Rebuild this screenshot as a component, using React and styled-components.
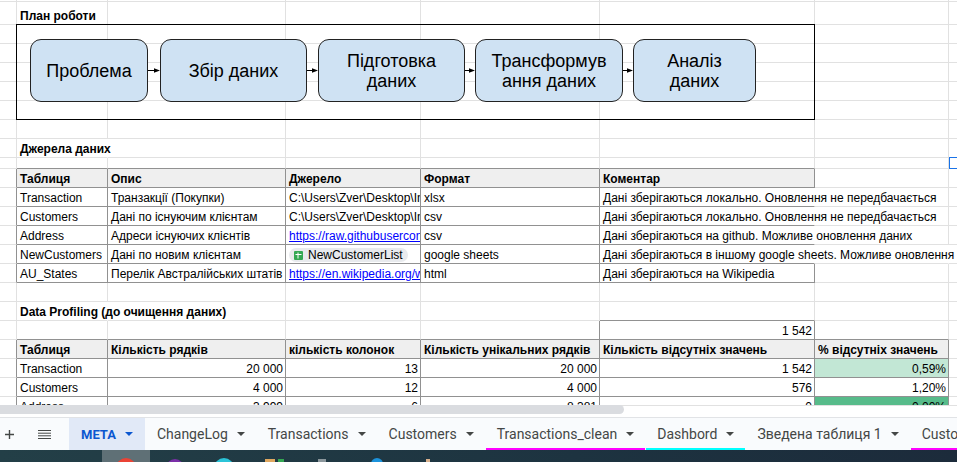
import React from 'react';
import styled, { createGlobalStyle } from 'styled-components';

const Global = createGlobalStyle`
  * { box-sizing: border-box; }
  html, body, #root { height: 100%; margin: 0; }
  body { background: #fff; overflow: hidden; }
`;

const Page = styled.div`
  height: 100%;
  display: flex;
  flex-direction: column;
  font-family: "Liberation Sans", Arial, sans-serif;
  font-size: 12px;
  color: #000;
`;

const SheetView = styled.main`
  flex: 1;
  min-height: 0;
  overflow: hidden;
`;

const Grid = styled.table`
  width: 100%;
  min-width: 957px;
  table-layout: fixed;
  border-collapse: separate;
  border-spacing: 0;
`;

const Row = styled.tr`
  height: ${(p) => p.$h || 19}px;
`;

const edge = (dark) => (dark ? '#919191' : '#e1e1e1');

const Cell = styled.td`
  position: ${(p) => (p.$host ? 'relative' : 'static')};
  padding: ${(p) => (p.$host || p.$empty ? '0' : p.$num ? '2px 2px 0' : '2px 3px 0')};
  line-height: 16px;
  vertical-align: bottom;
  white-space: nowrap;
  overflow: ${(p) => (p.$spill ? 'visible' : 'hidden')};
  text-align: ${(p) => (p.$num ? 'right' : 'left')};
  font-weight: ${(p) => (p.$bold ? 700 : 400)};
  background: ${(p) => p.$fill || 'transparent'};
  border-bottom: 1px solid ${(p) => edge(p.$bottom)};
  border-right: 1px solid ${(p) => (p.$open ? 'transparent' : edge(p.$right))};

  &:last-child {
    border-right: 0;
  }
`;

const SheetLink = styled.a`
  color: #00f;
  text-decoration: underline;
`;

const Chip = styled.span`
  display: inline-flex;
  align-items: center;
  gap: 5px;
  height: 14px;
  padding: 0 5px;
  border-radius: 7px;
  background: #e8eaed;
  line-height: 14px;
  vertical-align: bottom;
  margin-bottom: 1px;
`;

const Diagram = styled.figure`
  position: absolute;
  z-index: 1;
  top: -1px;
  left: -1px;
  width: 799px;
  height: 96px;
  margin: 0;
  padding: 0 13px 3px;
  border: 1px solid #000;
  display: flex;
  align-items: center;
`;

const Step = styled.div`
  flex: none;
  width: ${(p) => p.$w}px;
  height: 63px;
  padding-top: 1px;
  display: flex;
  align-items: center;
  justify-content: center;
  border: 1px solid #222;
  border-radius: 11px;
  background: #cfe2f3;
  font-size: 18px;
  line-height: 20px;
  text-align: center;
  white-space: pre-line;
`;

const Selection = styled.div`
  position: absolute;
  z-index: 1;
  top: -1px;
  left: 0;
  right: -2px;
  height: 12px;
  border: 1px solid #1a73e8;
`;

const ScrollTrack = styled.div`
  height: 12px;
  background: linear-gradient(#e1e1e1 0 1px, #fff 1px);
`;

const ScrollThumb = styled.div`
  width: 65.2%;
  height: 9px;
  border-radius: 0 5px 5px 0;
  background: #dadce0;
`;

const TabBar = styled.nav`
  height: 33px;
  display: flex;
  overflow: hidden;
  border-top: 1px solid #e1e3e6;
  background: #f9fbfd;
`;

const IconButton = styled.button`
  flex: none;
  width: ${(p) => p.$w}px;
  padding: 0;
  border: 0;
  background: none;
  display: flex;
  align-items: center;
  justify-content: center;
`;

const Tab = styled.button`
  flex: none;
  display: flex;
  align-items: center;
  gap: 9px;
  padding: ${(p) => (p.$active ? '2px 12px 0' : '2px 11px 0')};
  border: 0;
  border-bottom: 2px solid ${(p) => p.$mark || 'transparent'};
  margin-right: 1px;
  background: ${(p) => (p.$active ? '#e1e9f7' : 'transparent')};
  color: ${(p) => (p.$active ? '#0b57d0' : '#444746')};
  font: ${(p) => (p.$active ? '700 13px' : '400 14px')} Roboto, sans-serif;
  white-space: nowrap;
`;

const Taskbar = styled.footer`
  height: 12px;
  overflow: hidden;
  background: linear-gradient(90deg, #233f47, #1d3340 60%, #1c2b3b);
`;

const COLS = [17, 91, 178, 135, 179, 215, 134];

const Caret = () => (
  <svg width="8" height="4" viewBox="0 0 8 4" aria-hidden="true">
    <path d="M0 0h8L4 4z" fill="currentColor" />
  </svg>
);

const Arrow = ({ w }) => (
  <svg width={w} height="8" viewBox={`${12 - w} 0 ${w} 8`} aria-hidden="true">
    <path d="M0 3.5h8" stroke="#000" />
    <path d="M6 1.2l6 2.3-6 2.3z" />
  </svg>
);

const SheetsIcon = () => (
  <svg width="9" height="9" viewBox="0 0 9 9" aria-hidden="true">
    <rect width="9" height="9" rx="1" fill="#34a853" />
    <path d="M1.5 3.5h6M4 1.5v6" stroke="#fff" />
  </svg>
);

const STEPS = [
  ['Проблема', 118, 12],
  ['Збір даних', 147, 11],
  ['Підготовка\nданих', 147, 10],
  ['Трансформув\nання даних', 148, 10],
  ['Аналіз\nданих', 123, 0],
];

const Pipeline = () => (
  <Diagram>
    {STEPS.map(([name, w, link]) => (
      <React.Fragment key={name}>
        <Step $w={w}>{name}</Step>
        {link > 0 && <Arrow w={link} />}
      </React.Fragment>
    ))}
  </Diagram>
);

const Blank = ({ h, b, children, selected }) => (
  <Row $h={h}>
    {COLS.map((_, i) => (
      <Cell
        key={i}
        $empty
        $host={i === 1 && !!children}
        $spill={i === 1 && !!children}
        $bottom={b && b.includes(i)}
      >
        {i === 1 && children}
      </Cell>
    ))}
    <Cell $empty $host={selected} $spill={selected}>{selected && <Selection />}</Cell>
  </Row>
);

const Title = ({ children, h, open, b }) => (
  <Row $h={h}>
    <Cell />
    <Cell as="th" scope="row" $bold $spill $open={open}>{children}</Cell>
    {[2, 3, 4, 5, 6, 7].map((i) => <Cell key={i} $bottom={i === b} />)}
  </Row>
);

const SOURCES = [
  ['Transaction', 'Транзакції (Покупки)', 'C:\\Users\\Zver\\Desktop\\In', 'xlsx', 'Дані зберігаються локально. Оновлення не передбачається'],
  ['Customers', 'Дані по існуючим клієнтам', 'C:\\Users\\Zver\\Desktop\\In', 'csv', 'Дані зберігаються локально. Оновлення не передбачається'],
  ['Address', 'Адреси існуючих клієнтів', <SheetLink href="#raw">https://raw.githubusercon</SheetLink>, 'csv', 'Дані зберігаються на github. Можливе оновлення даних'],
  ['NewCustomers', 'Дані по новим клієнтам', <Chip><SheetsIcon />NewCustomerList</Chip>, 'google sheets', 'Дані зберігаються в іншому google sheets. Можливе оновлення'],
  ['AU_States', 'Перелік Австралійських штатів', <SheetLink href="#wiki">https://en.wikipedia.org/w</SheetLink>, 'html', 'Дані зберігаються на Wikipedia'],
];

const PROFILE = [
  ['Transaction', '20 000', '13', '20 000', '1 542', '0,59%', '#c2e7d5'],
  ['Customers', '4 000', '12', '4 000', '576', '1,20%', '#fff'],
  ['Address', '3 999', '6', '8 381', '0', '0,00%', '#57bb8a'],
];

const TABS = [
  ['META'],
  ['ChangeLog'],
  ['Transactions'],
  ['Customers'],
  ['Transactions_clean', '#f0f'],
  ['Dashbord', '#0ff'],
  ['Зведена таблиця 1'],
  ['Customer', '#f0f'],
];

export default function App() {
  return (
    <Page>
      <Global />
      <SheetView>
        <Grid>
          <colgroup>
            {COLS.map((w, i) => <col key={i} style={{ width: w }} />)}
            <col />
          </colgroup>
          <tbody>
            <Blank h={2} />
            <Title h={23}>План роботи</Title>
            <Blank><Pipeline /></Blank>
            <Blank />
            <Blank />
            <Blank />
            <Blank />
            <Blank />
            <Title open>Джерела даних</Title>
            <Blank h={11} b={[1, 2, 3, 4, 5]} selected />
            <Row>
              <Cell $right />
              {['Таблиця', 'Опис', 'Джерело', 'Формат', 'Коментар'].map((t) => (
                <Cell as="th" key={t} $bold $fill="#efefef" $right $bottom>{t}</Cell>
              ))}
              <Cell /><Cell />
            </Row>
            {SOURCES.map((r, n) => (
              <Row key={n}>
                <Cell $right />
                {r.map((t, i) => (
                  <Cell key={i} $right $bottom $spill={i === 4} $open={i === 4 && n < 4}>{t}</Cell>
                ))}
                <Cell $open={n === 3} /><Cell />
              </Row>
            ))}
            <Blank />
            <Title open b={5}>Data Profiling (до очищення даних)</Title>
            <Row>
              <Cell />
              <Cell $bottom /><Cell $bottom /><Cell $bottom />
              <Cell $bottom $right />
              <Cell $bottom $right $num>1 542</Cell>
              <Cell $bottom /><Cell />
            </Row>
            <Row>
              <Cell $right />
              {['Таблиця', 'Кількість рядків', 'кількість колонок', 'Кількість унікальних рядків', 'Кількість відсутніх значень', '% відсутніх значень'].map((t) => (
                <Cell as="th" key={t} $bold $fill="#efefef" $right $bottom>{t}</Cell>
              ))}
              <Cell />
            </Row>
            {PROFILE.map((r) => (
              <Row key={r[0]}>
                <Cell $right />
                {r.slice(0, 6).map((t, i) => (
                  <Cell key={i} $right $bottom $num={i > 0} $fill={i === 5 ? r[6] : undefined}>{t}</Cell>
                ))}
                <Cell />
              </Row>
            ))}
          </tbody>
        </Grid>
      </SheetView>
      <ScrollTrack><ScrollThumb /></ScrollTrack>
      <TabBar>
        <IconButton $w={19} aria-label="Add sheet">
          <svg width="9" height="9" viewBox="0 0 9 9"><path d="M4.5 0v9M0 4.5h9" stroke="#444746" strokeWidth="1.4" /></svg>
        </IconButton>
        <IconButton $w={50} aria-label="All sheets">
          <svg width="13" height="9" viewBox="0 0 13 9"><path d="M0 .5h13M0 3.2h13M0 5.8h13M0 8.5h13" stroke="#444746" /></svg>
        </IconButton>
        {TABS.map(([name, mark], i) => (
          <Tab key={name} $active={i === 0} $mark={mark}>{name}<Caret /></Tab>
        ))}
      </TabBar>
      <Taskbar>
        <svg width="480" height="12" viewBox="0 0 480 12" aria-hidden="true">
          <rect x="102" width="48" height="12" fill="#5f7076" />
          <circle cx="126" cy="18" r="10" fill="#ea4335" />
          <circle cx="175" cy="18" r="9" fill="#7b2fa8" />
          <circle cx="224" cy="18" r="10" fill="#2bc4d8" />
          <path d="M265 9h10v3h-10z" fill="#e0a860" />
          <path d="M278 9h6v3h-6z" fill="#34a853" />
          <path d="M318 9h8v3h-8z" fill="#8b979c" />
          <circle cx="377" cy="14" r="6" fill="#1c93dc" />
          <path d="M426 9h4v3h-4z" fill="#d8b08c" />
        </svg>
      </Taskbar>
    </Page>
  );
}
